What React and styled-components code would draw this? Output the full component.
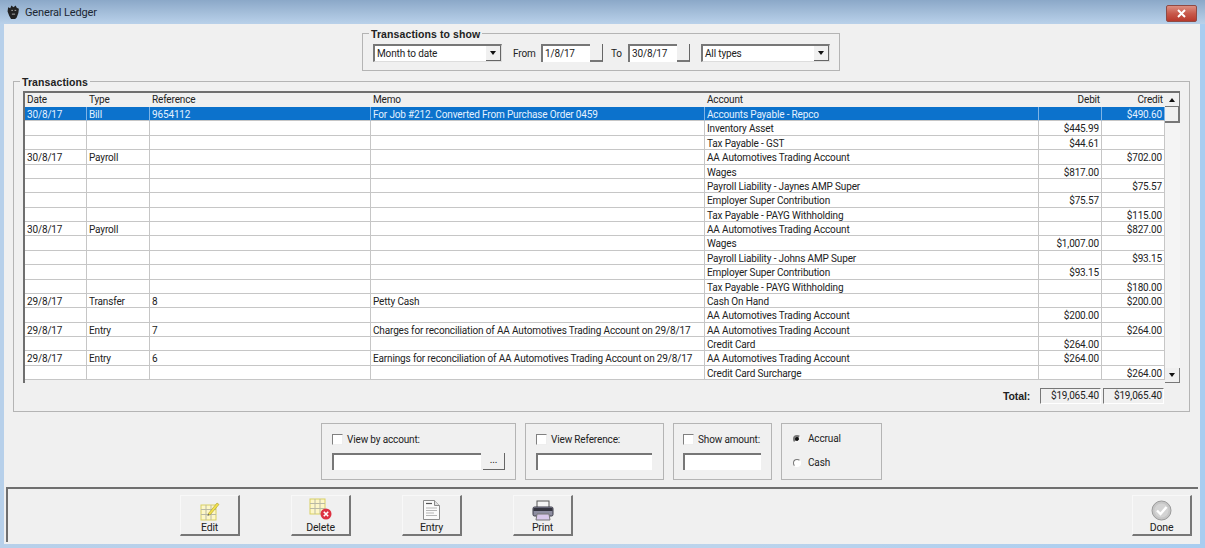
import React from 'react';
import styled, { createGlobalStyle } from 'styled-components';

const Global = createGlobalStyle`
  html, body { margin: 0; padding: 0; background: #b9d1ea; }
  body { font-family: Roboto, "Liberation Sans", Arial, sans-serif; font-size: 10px; letter-spacing: -0.15px; color: #222; }
`;

const Window = styled.div`
  width: 1205px;
  height: 548px;
  display: flex;
  flex-direction: column;
  overflow: hidden;
  background: linear-gradient(90deg, #b7d0ea 0, #bcd4ec 60%, #a9cdf0 100%);
`;
const TitleBar = styled.div`
  height: 24px;
  flex: none;
  display: flex;
  align-items: center;
  padding: 0 8px 0 7px;
  gap: 5px;
  background: linear-gradient(180deg, #8ba8c8 0, #a3bdd9 50%, #b9d1ea 100%);
  font-size: 11px;
  letter-spacing: -0.15px;
  color: #1c2733;
`;
const TitleText = styled.span`
  flex: 1;
`;
const CloseButton = styled.div`
  width: 29px;
  height: 15px;
  margin-top: 3px;
  display: flex;
  align-items: center;
  justify-content: center;
  border: 1px solid #8f4a44;
  border-radius: 2px;
  background: linear-gradient(180deg, #dc8f82 0, #c85a4c 50%, #b8392c 100%);
`;
const Body = styled.div`
  flex: 1;
  margin: 0 5px 4px 4px;
  display: flex;
  flex-direction: column;
  background: #f0f0f0;
  padding-top: 9px;
`;
const GroupBox = styled.div`
  position: relative;
  box-sizing: border-box;
  width: ${(p) => p.$w}px;
  height: ${(p) => p.$h}px;
  border: 1px solid #b4b4b4;
`;
const Legend = styled.span`
  position: absolute;
  top: -6px;
  left: 6px;
  padding: 0 2px;
  background: #f0f0f0;
  font-family: "Liberation Sans", Arial, sans-serif;
  font-size: 10.5px;
  font-weight: bold;
  line-height: 12px;
  letter-spacing: 0.1px;
`;
const FilterWrap = styled.div`
  display: flex;
  justify-content: center;
  padding-right: 2px;
`;
const FilterRow = styled.div`
  display: flex;
  align-items: center;
  height: 100%;
  padding: 2px 0 0 10px;
  box-sizing: border-box;
`;
const FieldLabel = styled.span`
  box-sizing: border-box;
  width: ${(p) => p.$w}px;
  padding-left: ${(p) => p.$left}px;
  flex: none;
`;
const Combo = styled.div`
  box-sizing: border-box;
  width: ${(p) => p.$w}px;
  height: 18px;
  display: flex;
  align-items: center;
  padding-left: 2px;
  background: #fff;
  border-top: 2px solid #777;
  border-left: 2px solid #777;
  border-right: 1px solid #ddd;
  border-bottom: 1px solid #ddd;
`;
const ComboText = styled.span`
  flex: 1;
`;
const ComboArrow = styled.div`
  width: 15px;
  height: 15px;
  display: flex;
  align-items: center;
  justify-content: center;
  background: #f0f0f0;
  border-right: 1px solid #666;
  border-bottom: 1px solid #666;
  box-sizing: border-box;
`;
const Triangle = styled.div`
  width: 0;
  height: 0;
  border-left: 3.5px solid transparent;
  border-right: 3.5px solid transparent;
  ${(p) => (p.$up ? 'border-bottom: 4px solid #111;' : 'border-top: 4px solid #111;')}
`;
const TextBox = styled.div`
  box-sizing: border-box;
  width: ${(p) => p.$w}px;
  height: ${(p) => p.$h || 18}px;
  padding-left: 2px;
  line-height: 15px;
  background: #fff;
  border-top: 2px solid #777;
  border-left: 2px solid #777;
`;
const SpinButton = styled.div`
  box-sizing: border-box;
  width: 13px;
  height: 18px;
  background: #f0f0f0;
  border-right: 1px solid #666;
  border-bottom: 2px solid #777;
`;
const TransactionsWrap = styled.div`
  padding: 10px 0 0 9px;
`;
const TransactionsInner = styled.div`
  display: flex;
  flex-direction: column;
  padding: 9px 9px 0;
`;
const Grid = styled.div`
  display: flex;
  height: 292px;
  width: 1157px;
  box-sizing: border-box;
  border-left: 2px solid #6f6f6f;
  border-top: 2px solid #6f6f6f;
  background: #f0f0f0;
`;
const GridMain = styled.div`
  width: 1140px;
  flex: none;
`;
const RowLine = styled.div`
  display: grid;
  grid-template-columns: 62px 63px 221px 334px 334px 63px 63px;
  height: ${(p) => (p.$head ? 14 : 14.39)}px;
  line-height: ${(p) => (p.$head ? 13 : 15)}px;
  background: ${(p) => (p.$head ? '#f0f0f0' : p.$selected ? '#0c72cc' : '#fff')};
  color: ${(p) => (p.$selected ? '#e3f1ff' : '#222')};
`;
const Cell = styled.div`
  box-sizing: border-box;
  padding: 0 2px 0 2px;
  white-space: nowrap;
  overflow: hidden;
  text-align: ${(p) => (p.$right ? 'right' : 'left')};
  border-right: ${(p) => (p.$head ? 'none' : p.$selected ? '1px solid #7fb4e6' : '1px solid #c6c6c6')};
  border-bottom: ${(p) => (p.$head ? 'none' : '1px solid #c6c6c6')};
`;
const ScrollBar = styled.div`
  width: 15px;
  flex: none;
  display: flex;
  flex-direction: column;
  background: #f4f4f4;
`;
const ScrollButton = styled.div`
  box-sizing: border-box;
  height: ${(p) => p.$h}px;
  flex: none;
  display: flex;
  align-items: center;
  justify-content: center;
  background: #f0f0f0;
  border-right: 1px solid #777;
  border-bottom: 1px solid #777;
`;
const ScrollThumb = styled(ScrollButton)`
  border-right: 2px solid #777;
  border-bottom: 2px solid #777;
`;
const ScrollTrack = styled.div`
  flex: 1;
`;
const TotalRow = styled.div`
  display: flex;
  align-items: center;
  justify-content: flex-end;
  height: 17px;
  margin-top: 4px;
  padding-right: 16px;
  gap: 2px;
`;
const TotalLabel = styled.span`
  font-family: "Liberation Sans", Arial, sans-serif;
  font-size: 10.5px;
  font-weight: bold;
  margin-right: 8px;
`;
const TotalBox = styled.div`
  box-sizing: border-box;
  width: 61px;
  height: 16px;
  padding-right: 1px;
  line-height: 14px;
  text-align: right;
  white-space: nowrap;
  border-top: 1px solid #777;
  border-left: 1px solid #777;
  border-right: 1px solid #fff;
  border-bottom: 1px solid #fff;
`;
const OptionsRow = styled.div`
  display: flex;
  justify-content: center;
  gap: 9px;
  margin-top: 11px;
  padding-right: 1px;
`;
const OptionGroup = styled(GroupBox)`
  padding: 10px 10px 0 ${(p) => p.$left || 10}px;
  display: flex;
  flex-direction: column;
  gap: 8px;
`;
const CheckLine = styled.div`
  display: flex;
  align-items: center;
  gap: 4px;
  height: 11px;
  white-space: nowrap;
`;
const CheckBox = styled.div`
  box-sizing: border-box;
  flex: none;
  width: 11px;
  height: 11px;
  background: #fff;
  border-top: 1px solid #808080;
  border-left: 1px solid #808080;
  border-right: 1px solid #eee;
  border-bottom: 1px solid #eee;
`;
const InputLine = styled.div`
  display: flex;
  gap: 2px;
`;
const DotsButton = styled.div`
  box-sizing: border-box;
  width: 22px;
  height: 17px;
  line-height: 13px;
  text-align: center;
  background: #f0f0f0;
  border-right: 1px solid #666;
  border-bottom: 1px solid #666;
`;
const RadioGroup = styled(OptionGroup)`
  gap: 11px;
  padding-top: 8px;
`;
const RadioLine = styled.div`
  display: flex;
  align-items: center;
  gap: 7px;
  height: 13px;
`;
const Radio = styled.div`
  box-sizing: border-box;
  width: 8px;
  height: 8px;
  margin-left: 1px;
  border-radius: 50%;
  border: ${(p) => (p.$on ? '2.5px solid #f4f4f4' : '1px solid #fff')};
  border-left-color: #777;
  border-top-color: #777;
  background: ${(p) => (p.$on ? '#111' : '#fff')};
`;
const Toolbar = styled.div`
  flex: 1;
  margin: 7px 2px 2px 2px;
  display: flex;
  padding: 6px 6px 0 172px;
  gap: 51px;
  border-top: 2px solid #6f6f6f;
  border-left: 2px solid #6f6f6f;
`;
const ToolButton = styled.div`
  box-sizing: border-box;
  width: 60px;
  height: 41px;
  display: flex;
  flex-direction: column;
  align-items: center;
  justify-content: flex-end;
  background: #f0f0f0;
  font-size: 10.5px;
  border-top: 1px solid #f8f8f8;
  border-left: 1px solid #f8f8f8;
  border-right: 2px solid #777;
  border-bottom: 2px solid #777;
  ${(p) => p.$end && 'margin-left: auto;'}
`;

const EditIcon = () => (
  <svg width="20" height="21" viewBox="0 0 20 21">
    <rect x="1" y="5" width="15" height="15" fill="#fdf7c8" stroke="#d8cf62" />
    <path d="M1 9.5h15M1 14.5h15M6 5v15M11 5v15" stroke="#b9b9a4" />
    <path d="M8 14l9-11 2 1.5L10 15z" fill="#f2e14a" stroke="#a89a32" strokeWidth="0.6" />
    <path d="M8 14l-0.5 2 2-1z" fill="#555" />
  </svg>
);
const DeleteIcon = () => (
  <svg width="24" height="23" viewBox="0 0 24 23">
    <rect x="1" y="1" width="15" height="15" fill="#fdf7c8" stroke="#d8cf62" />
    <path d="M1 5.5h15M1 10.5h15M6 1v15M11 1v15" stroke="#b9b9a4" />
    <circle cx="17" cy="16" r="5.5" fill="#dd3040" />
    <path d="M14.8 13.8l4.4 4.4M19.2 13.8l-4.4 4.4" stroke="#fff" strokeWidth="1.6" />
  </svg>
);
const EntryIcon = () => (
  <svg width="19" height="22" viewBox="0 0 19 22">
    <path d="M1.5 1.5h11l5 5v14h-16z" fill="#fafafa" stroke="#8a8a8a" />
    <path d="M12.5 1.5v5h5" fill="#ddd" stroke="#8a8a8a" />
    <path d="M4 4.5h6" stroke="#555" strokeWidth="1.2" />
    <path d="M4 9h11M4 11.5h11M4 14h8M4 16.5h11" stroke="#b5b5b5" />
  </svg>
);
const PrintIcon = () => (
  <svg width="22" height="21" viewBox="0 0 22 21">
    <rect x="5" y="1" width="12" height="7" fill="#f4f4f4" stroke="#555" />
    <rect x="1" y="7" width="20" height="9" rx="1.5" fill="#8d8da0" stroke="#3d3d4a" />
    <rect x="1.5" y="8" width="19" height="3" fill="#34343f" />
    <path d="M5 14h12l1 6H4z" fill="#d8c8ea" stroke="#777" />
  </svg>
);
const DoneIcon = () => (
  <svg width="21" height="21" viewBox="0 0 21 21">
    <circle cx="10.5" cy="10.5" r="9.5" fill="#c6c6c6" stroke="#9a9a9a" />
    <circle cx="10.5" cy="10.5" r="7" fill="#d4d4d4" />
    <path d="M6 10.5l3.5 3.5 6-7" fill="none" stroke="#fff" strokeWidth="2.4" />
  </svg>
);
const AppLogo = () => (
  <svg width="13" height="14" viewBox="0 0 12 13">
    <path d="M1 2l2 1 1-2.5 2 1.5 2-1.5 1 2 2 1-.5 4-1.5 4-2 2H4L2 10 0.5 6z" fill="#222" />
    <path d="M4 5h1.5M7 5h1.5M4.5 8.5h3" stroke="#bbb" strokeWidth="0.8" />
  </svg>
);

const rows = [
  ['30/8/17', 'Bill', '9654112', 'For Job #212. Converted From Purchase Order 0459', 'Accounts Payable - Repco', '', '$490.60'],
  ['', '', '', '', 'Inventory Asset', '$445.99', ''],
  ['', '', '', '', 'Tax Payable - GST', '$44.61', ''],
  ['30/8/17', 'Payroll', '', '', 'AA Automotives Trading Account', '', '$702.00'],
  ['', '', '', '', 'Wages', '$817.00', ''],
  ['', '', '', '', 'Payroll Liability - Jaynes AMP Super', '', '$75.57'],
  ['', '', '', '', 'Employer Super Contribution', '$75.57', ''],
  ['', '', '', '', 'Tax Payable - PAYG Withholding', '', '$115.00'],
  ['30/8/17', 'Payroll', '', '', 'AA Automotives Trading Account', '', '$827.00'],
  ['', '', '', '', 'Wages', '$1,007.00', ''],
  ['', '', '', '', 'Payroll Liability - Johns AMP Super', '', '$93.15'],
  ['', '', '', '', 'Employer Super Contribution', '$93.15', ''],
  ['', '', '', '', 'Tax Payable - PAYG Withholding', '', '$180.00'],
  ['29/8/17', 'Transfer', '8', 'Petty Cash', 'Cash On Hand', '', '$200.00'],
  ['', '', '', '', 'AA Automotives Trading Account', '$200.00', ''],
  ['29/8/17', 'Entry', '7', 'Charges for reconciliation of AA Automotives Trading Account on 29/8/17', 'AA Automotives Trading Account', '', '$264.00'],
  ['', '', '', '', 'Credit Card', '$264.00', ''],
  ['29/8/17', 'Entry', '6', 'Earnings for reconciliation of AA Automotives Trading Account on 29/8/17', 'AA Automotives Trading Account', '$264.00', ''],
  ['', '', '', '', 'Credit Card Surcharge', '', '$264.00'],
];
const headers = ['Date', 'Type', 'Reference', 'Memo', 'Account', 'Debit', 'Credit'];

export default function App() {
  return (
    <Window>
      <Global />
      <TitleBar>
        <AppLogo />
        <TitleText>General Ledger</TitleText>
        <CloseButton>
          <svg width="11" height="9" viewBox="0 0 11 9">
            <path d="M2 1l7 7M9 1L2 8" stroke="#fff" strokeWidth="2" />
          </svg>
        </CloseButton>
      </TitleBar>
      <Body>
        <FilterWrap>
          <GroupBox $w={478} $h={38}>
            <Legend>Transactions to show</Legend>
            <FilterRow>
              <Combo $w={129}>
                <ComboText>Month to date</ComboText>
                <ComboArrow><Triangle /></ComboArrow>
              </Combo>
              <FieldLabel $w={39} $left={11}>From</FieldLabel>
              <TextBox $w={49}>1/8/17</TextBox>
              <SpinButton />
              <FieldLabel $w={25} $left={8}>To</FieldLabel>
              <TextBox $w={49}>30/8/17</TextBox>
              <SpinButton />
              <FieldLabel $w={11} $left={0} />
              <Combo $w={129}>
                <ComboText>All types</ComboText>
                <ComboArrow><Triangle /></ComboArrow>
              </Combo>
            </FilterRow>
          </GroupBox>
        </FilterWrap>
        <TransactionsWrap>
          <GroupBox $w={1177} $h={331}>
            <Legend>Transactions</Legend>
            <TransactionsInner>
              <Grid>
                <GridMain>
                  <RowLine $head>
                    {headers.map((h, i) => (
                      <Cell key={h} $head $right={i > 4}>{h}</Cell>
                    ))}
                  </RowLine>
                  {rows.map((r, i) => (
                    <RowLine key={i} $selected={i === 0}>
                      {r.map((c, j) => (
                        <Cell key={j} $selected={i === 0} $right={j > 4}>{c}</Cell>
                      ))}
                    </RowLine>
                  ))}
                </GridMain>
                <ScrollBar>
                  <ScrollButton $h={14}><Triangle $up /></ScrollButton>
                  <ScrollThumb $h={16} />
                  <ScrollTrack />
                  <ScrollButton $h={15}><Triangle /></ScrollButton>
                </ScrollBar>
              </Grid>
              <TotalRow>
                <TotalLabel>Total:</TotalLabel>
                <TotalBox>$19,065.40</TotalBox>
                <TotalBox>$19,065.40</TotalBox>
              </TotalRow>
            </TransactionsInner>
          </GroupBox>
        </TransactionsWrap>
        <OptionsRow>
          <OptionGroup $w={195} $h={57}>
            <CheckLine><CheckBox />View by account:</CheckLine>
            <InputLine>
              <TextBox $w={150} $h={17} />
              <DotsButton>...</DotsButton>
            </InputLine>
          </OptionGroup>
          <OptionGroup $w={139} $h={57}>
            <CheckLine><CheckBox />View Reference:</CheckLine>
            <TextBox $w={116} $h={17} />
          </OptionGroup>
          <OptionGroup $w={99} $h={57} $left={9}>
            <CheckLine><CheckBox />Show amount:</CheckLine>
            <TextBox $w={78} $h={17} />
          </OptionGroup>
          <RadioGroup $w={101} $h={57}>
            <RadioLine><Radio $on />Accrual</RadioLine>
            <RadioLine><Radio />Cash</RadioLine>
          </RadioGroup>
        </OptionsRow>
        <Toolbar>
          <ToolButton><EditIcon />Edit</ToolButton>
          <ToolButton><DeleteIcon />Delete</ToolButton>
          <ToolButton><EntryIcon />Entry</ToolButton>
          <ToolButton><PrintIcon />Print</ToolButton>
          <ToolButton $end><DoneIcon />Done</ToolButton>
        </Toolbar>
      </Body>
    </Window>
  );
}
